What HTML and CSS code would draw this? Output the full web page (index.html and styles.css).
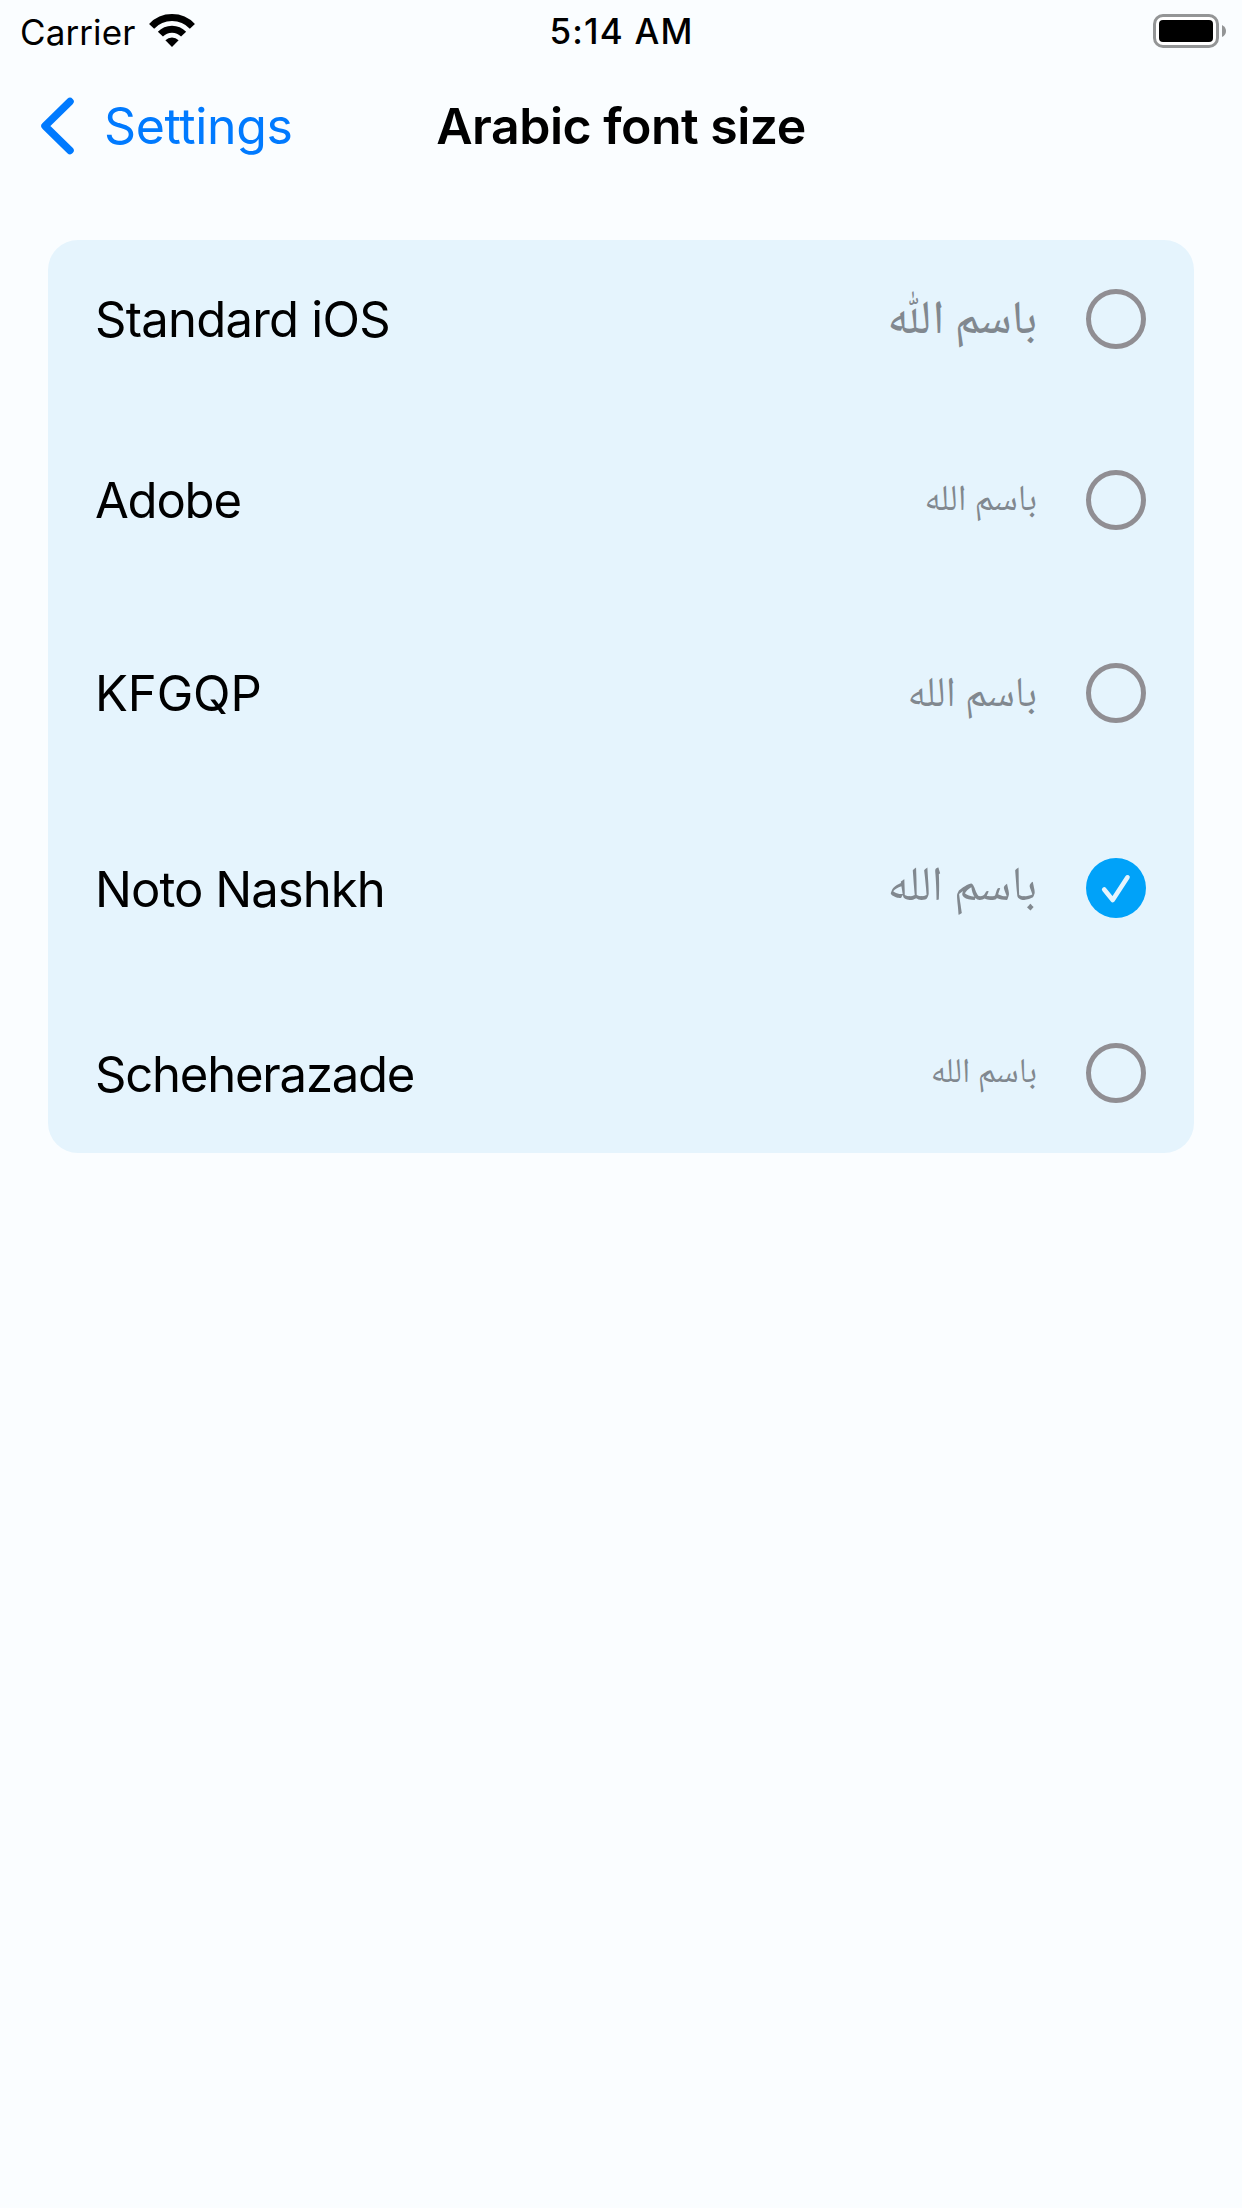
FILE: index.html
```
<!DOCTYPE html>
<html lang="en">
<head>
<meta charset="utf-8">
<title>Arabic font size</title>
<link rel="stylesheet" href="styles.css">
</head>
<body>
<div class="status">
  <div class="carrier"><span class="carrier-name">Carrier</span>
    <svg class="wifi" width="46" height="34" viewBox="0 0 46 34"><g fill="none" stroke="#000" stroke-width="7"><path d="M2.6 12.4A28 28 0 0 1 43.4 12.4"/><path d="M11.4 20.2A16 16 0 0 1 34.6 20.2"/></g><path d="M23 33L16.4 26.2A9.5 9.5 0 0 1 29.6 26.2Z"/></svg>
  </div>
  <div class="time">5:14 AM</div>
  <svg class="battery" width="74" height="34" viewBox="0 0 74 34"><rect x="1.5" y="1.5" width="63" height="31" rx="8.5" fill="#fff" stroke="#939596" stroke-width="3"/><rect x="6" y="6" width="54" height="22" rx="4"/><path d="M69 11Q73 13 73 17T69 23Z" fill="#939596"/></svg>
</div>
<header class="nav">
  <a class="back"><svg width="34" height="58" viewBox="0 0 34 58"><path d="M30 4.5L5 29L30 53.5" fill="none" stroke="#007aff" stroke-width="7.5" stroke-linecap="round" stroke-linejoin="round"/></svg><span class="back-label">Settings</span></a>
  <h1 class="title">Arabic font size</h1>
</header>
<main class="card">
  <div class="row row-ios"><span class="name">Standard iOS</span><span class="sample" lang="ar" dir="rtl">باسم اللّٰه</span><span class="radio"></span></div>
  <div class="row row-adobe"><span class="name">Adobe</span><span class="sample" lang="ar" dir="rtl">باسم الله</span><span class="radio"></span></div>
  <div class="row row-kfgqp"><span class="name">KFGQP</span><span class="sample" lang="ar" dir="rtl">باسم الله</span><span class="radio"></span></div>
  <div class="row row-noto"><span class="name">Noto Nashkh</span><span class="sample" lang="ar" dir="rtl">باسم الله</span><span class="radio checked"><svg width="60" height="60" viewBox="0 0 60 60"><path d="M18.2 31.5L26.7 42L41.5 19.3" fill="none" stroke="#e5f4fd" stroke-width="4.6" stroke-linecap="round" stroke-linejoin="round"/></svg></span></div>
  <div class="row row-sche"><span class="name">Scheherazade</span><span class="sample" lang="ar" dir="rtl">باسم الله</span><span class="radio"></span></div>
</main>
</body>
</html>
```
FILE: styles.css
```
* { box-sizing: border-box; }
body { margin: 0; min-height: 2208px; background: #fafdff; color: #000; font-family: Inter, "Liberation Sans", sans-serif; }
svg { display: block; flex: none; }
.status { display: grid; grid-template-columns: 1fr auto 1fr; align-items: center; height: 60px; padding: 0 15px 0 20px; }
.carrier { display: flex; align-items: center; gap: 14px; }
.carrier-name { padding-top: 1px; font-size: 35px; line-height: 60px; letter-spacing: 0.1px; }
.time { margin-right: 4px; padding-top: 1px; font-size: 35px; font-weight: 500; line-height: 61px; letter-spacing: 1.2px; }
.battery { justify-self: end; }
.nav { display: grid; grid-template-columns: 1fr auto 1fr; align-items: center; height: 132px; padding: 0 40px; }
.back { display: flex; align-items: center; gap: 30px; color: #007aff; }
.back-label { font-size: 50px; line-height: 60px; letter-spacing: -0.35px; }
.title { margin: 0; font-size: 50px; font-weight: 600; line-height: 60px; letter-spacing: -0.5px; }
.card { margin: 48px 48px 0; border-radius: 30px; background: #e5f4fd; overflow: hidden; }
.row { display: flex; align-items: center; padding: 0 48px 0 47px; }
.row-ios { height: 157px; }
.row-adobe { height: 206px; }
.row-kfgqp { height: 179px; }
.row-noto { height: 212px; }
.row-sche { height: 159px; padding-bottom: 1px; }
.name { flex: 1; font-size: 49px; line-height: 60px; padding-top: 2px; letter-spacing: -0.75px; }
.row-adobe .name { letter-spacing: -1.2px; }
.row-kfgqp .name { letter-spacing: -0.1px; }
.row-noto .name { padding-top: 4px; letter-spacing: -0.95px; }
.row-sche .name { padding-top: 4px; letter-spacing: -1.2px; }
.sample { margin-right: 49px; color: #81888f; font-family: "Noto Naskh Arabic", "Noto Sans Arabic", "DejaVu Sans", sans-serif; line-height: 70px; white-space: nowrap; }
.row-ios .sample { padding-top: 8px; font-size: 47px; font-weight: 500; }
.row-adobe .sample { padding-top: 4px; font-size: 36.5px; }
.row-kfgqp .sample { padding-top: 8px; font-size: 42px; }
.row-noto .sample { padding-top: 3px; font-size: 48.5px; }
.row-sche .sample { padding-top: 4px; font-size: 34.5px; }
.radio { width: 60px; height: 60px; border: 5px solid #908e93; border-radius: 50%; }
.radio.checked { border: 0; background: #00a2f9; }
```
